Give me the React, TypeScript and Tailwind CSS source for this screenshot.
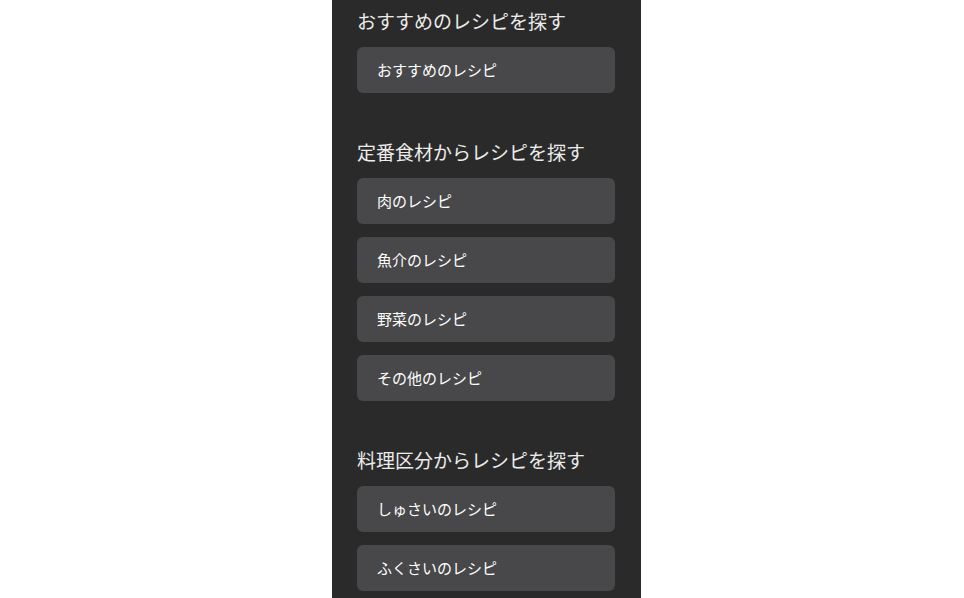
import React from 'react';

type Section = {
  title: string;
  items: string[];
};

const sections: Section[] = [
  { title: 'おすすめのレシピを探す', items: ['おすすめのレシピ'] },
  {
    title: '定番食材からレシピを探す',
    items: ['肉のレシピ', '魚介のレシピ', '野菜のレシピ', 'その他のレシピ'],
  },
  {
    title: '料理区分からレシピを探す',
    items: ['しゅさいのレシピ', 'ふくさいのレシピ'],
  },
];

const App: React.FC = () => {
  return (
    <div
      className="h-[598px] w-full overflow-hidden bg-white"
      style={{ fontFamily: '"Noto Sans CJK JP", "Noto Sans", sans-serif' }}
    >
      <div className="ml-[332px] flex h-full w-[309px] flex-col gap-[46px] bg-[#2a2a2a] pl-[25px] pr-[26px] pt-[8px]">
        {sections.map(section => (
          <div key={section.title} className="flex flex-col gap-[13px]">
            <h2 className="text-[19px] leading-[26px] font-normal text-[#ececec]">
              {section.title}
            </h2>
            {section.items.map(item => (
              <button
                key={item}
                className="flex h-[46px] w-full items-center rounded-[6px] bg-[#48484a] pl-[20px] text-left text-[15px] font-normal text-white"
              >
                {item}
              </button>
            ))}
          </div>
        ))}
      </div>
    </div>
  );
};

export default App;
